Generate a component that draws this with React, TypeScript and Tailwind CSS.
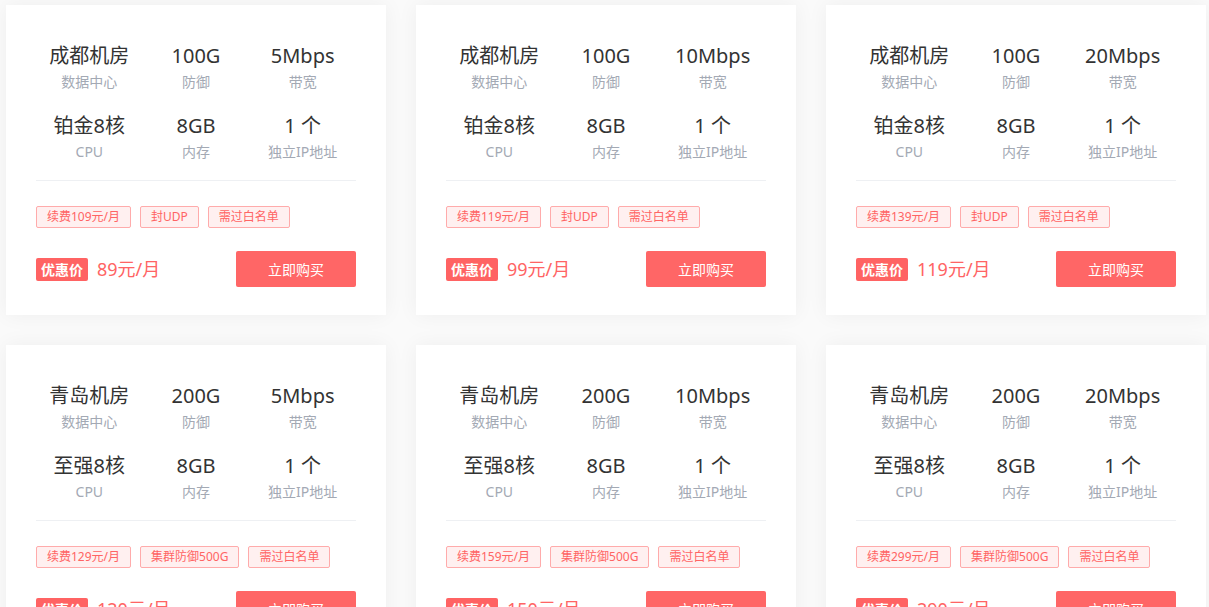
const plans = [
  { room: "成都机房", def: "100G", bw: "5Mbps", cpu: "铂金8核", tags: ["续费109元/月", "封UDP", "需过白名单"], price: "89元/月" },
  { room: "成都机房", def: "100G", bw: "10Mbps", cpu: "铂金8核", tags: ["续费119元/月", "封UDP", "需过白名单"], price: "99元/月" },
  { room: "成都机房", def: "100G", bw: "20Mbps", cpu: "铂金8核", tags: ["续费139元/月", "封UDP", "需过白名单"], price: "119元/月" },
  { room: "青岛机房", def: "200G", bw: "5Mbps", cpu: "至强8核", tags: ["续费129元/月", "集群防御500G", "需过白名单"], price: "120元/月" },
  { room: "青岛机房", def: "200G", bw: "10Mbps", cpu: "至强8核", tags: ["续费159元/月", "集群防御500G", "需过白名单"], price: "150元/月" },
  { room: "青岛机房", def: "200G", bw: "20Mbps", cpu: "至强8核", tags: ["续费299元/月", "集群防御500G", "需过白名单"], price: "290元/月" },
]

function Stat({ value, label }: { value: string; label: string }) {
  return (
    <div className="flex flex-col items-center">
      <div className="text-[20px] leading-[30px] text-[#333]">{value}</div>
      <div className="text-[14px] leading-[22px] text-[#a3a9b4]">{label}</div>
    </div>
  )
}

function PlanCard({ plan }: { plan: (typeof plans)[number] }) {
  return (
    <div className="bg-white px-[30px] pt-[36px] pb-[28px] shadow-[0_0_20px_rgba(0,0,0,0.05)]">
      <div className="grid grid-cols-3 gap-y-[18px]">
        <Stat value={plan.room} label="数据中心" />
        <Stat value={plan.def} label="防御" />
        <Stat value={plan.bw} label="带宽" />
        <Stat value={plan.cpu} label="CPU" />
        <Stat value="8GB" label="内存" />
        <Stat value="1 个" label="独立IP地址" />
      </div>
      <div className="mt-[17px] h-px bg-[#eef0f3]" />
      <div className="mt-[25px] flex gap-[9px]">
        {plan.tags.map((t) => (
          <span key={t} className="h-[22px] px-[10px] border border-[#ffabab] bg-[#fff0f0] rounded-[2px] text-[12px] leading-[20px] text-[#ff6464]">
            {t}
          </span>
        ))}
      </div>
      <div className="mt-[23px] flex items-center justify-between">
        <div className="flex items-center gap-[9px]">
          <span className="h-[23px] px-[5px] bg-[#ff6363] rounded-[2px] text-white text-[14px] font-bold leading-[23px]">优惠价</span>
          <span className="text-[18px] text-[#ff6464]">{plan.price}</span>
        </div>
        <button className="w-[120px] h-[36px] bg-[#ff6666] rounded-[2px] text-white text-[14px]">立即购买</button>
      </div>
    </div>
  )
}

export default function App() {
  return (
    <div
      className="min-h-screen bg-[#fafafa] pl-[6px] pt-[5px]"
      style={{ fontFamily: '"Noto Sans", "Noto Sans CJK SC", sans-serif' }}
    >
      <div className="grid grid-cols-[380px_380px_380px] gap-[30px]">
        {plans.map((p, i) => (
          <PlanCard key={i} plan={p} />
        ))}
      </div>
    </div>
  )
}
